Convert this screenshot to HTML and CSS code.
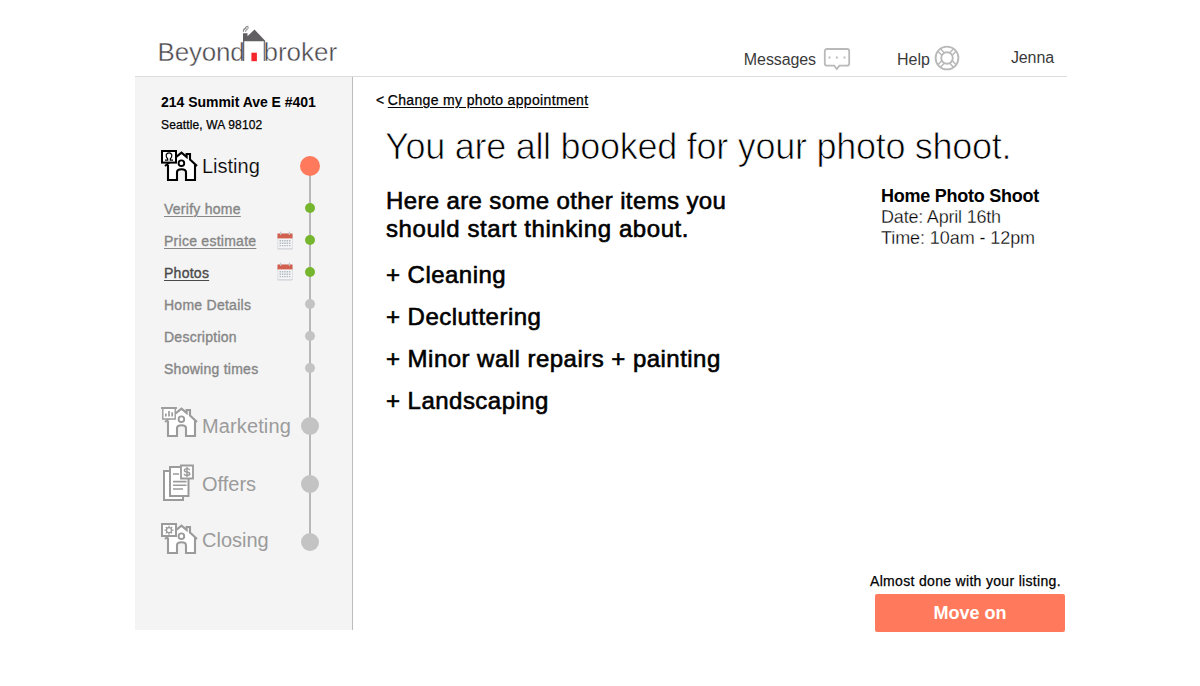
FILE: index.html
```
<!DOCTYPE html>
<html lang="en">
<head>
<meta charset="utf-8">
<title>Beyond broker</title>
<link rel="stylesheet" href="styles.css">
</head>
<body>
<svg width="0" height="0" class="defs">
  <defs>
    <g id="house" stroke-width="2.1" stroke="currentColor">
      <path d="M7 14.5L20.5 3.2L34 14.5V30H25V22Q25 19 20.5 19T16 22V30H7Z" fill="#fff" stroke="none"/>
      <path d="M7 15V30H16V22.3Q16 19.2 20.5 19.2T25 22.3V30H34V14.5M4 16L20.5 2.6L25.6 7V4H29V9.6L36 16" fill="none"/>
      <circle cx="20.4" cy="13.2" r="2.8" fill="#fff" stroke-width="1.9"/>
    </g>
    <g id="calendar">
      <rect x="0.8" y="3" width="14.6" height="15" rx="1" fill="#f4f5f6" stroke="#cfd2d6" stroke-width=".6"/>
      <path d="M.5 2.5H15.5V7.4H.5Z" fill="#d2604f"/>
      <path d="M3.6 .8V4M12.4 .8V4" stroke="#c9c4c4" stroke-width="1.2"/>
      <path d="M2.5 9.8H13.5M2.5 12.2H13.5M2.5 14.6H13.5" stroke="#b3bac2" stroke-width="1.4" stroke-dasharray="1.5 .85"/>
      <path d="M.5 17.8H15.5" stroke="#c9ccd0" stroke-width=".8"/>
    </g>
  </defs>
</svg>
<div class="page">
  <header class="topbar">
    <div class="logo">
      <span class="word first">Beyond</span>
      <svg class="mark" width="26" height="38" viewBox="0 0 26 38">
        <path d="M2 8.2H6.5V11.2L13.5 4.4L24.6 16.2H2Z" fill="#625f63"/>
        <path d="M2.6 16V36M23.4 16V36" stroke="#68666a" stroke-width="1.3"/>
        <path d="M2.5 6.8Q2 4 4.5 3.4Q4 1.5 7.5 1.2M4.4 6.8Q4.6 4.8 6.6 4.2M5.5 3H8" stroke="#8c8a8d" stroke-width="1.1" fill="none"/>
        <path d="M10.4 27.7H15.9V36.2H10.4Z" fill="#f5262b"/>
      </svg>
      <span class="word">broker</span>
    </div>
    <nav class="links">
      <a class="link messages">Messages
        <svg width="28" height="24" viewBox="0 0 28 24" fill="none" stroke="#b9b9b9" stroke-width="1.8">
          <path d="M4 2H24Q26.2 2 26.2 4.2V16.5Q26.2 18.7 24 18.7H16.4L13.8 22L11.2 18.7H4Q1.8 18.7 1.8 16.5V4.2Q1.8 2 4 2Z"/>
          <path d="M5.6 10.5H7.4M12.9 10.5H14.7M20.6 10.5H22.4"/>
        </svg>
      </a>
      <a class="link help">Help
        <svg width="26" height="26" viewBox="0 0 26 26" fill="none" stroke="#b9b9b9" stroke-width="1.9">
          <circle cx="13" cy="13" r="11.4"/>
          <circle cx="13" cy="13" r="5.8"/>
          <path d="M7.7 10.2L4.2 6.6M10.2 7.7L6.7 4M15.8 7.7L19.3 4M18.3 10.2L21.8 6.6M18.3 15.8L21.8 19.4M15.8 18.3L19.3 22M10.2 18.3L6.7 22M7.7 15.8L4.2 19.4" stroke-width="1.5"/>
        </svg>
      </a>
      <a class="link user">Jenna</a>
    </nav>
  </header>
  <div class="columns">
    <aside class="sidebar">
      <div class="address">214 Summit Ave E #401</div>
      <div class="city">Seattle, WA 98102</div>
      <ol class="steps">
        <li class="stage active">
          <svg class="icon" width="38" height="34" viewBox="0 0 38 34">
            <use href="#house"/>
            <rect x="1" y="1" width="14" height="11.6" fill="#fff" stroke="currentColor" stroke-width="2"/>
            <path d="M4 10.2H6.7V9Q4.8 7 5.2 4.8Q6 2.9 8 2.9T10.8 4.8Q11.2 7 9.3 9V10.2H12" fill="none" stroke="currentColor" stroke-width="1.2"/>
          </svg>
          <span class="name">Listing</span><i class="dot"></i>
        </li>
        <li class="step done"><a class="name">Verify home</a><i class="dot"></i></li>
        <li class="step done"><a class="name">Price estimate</a><svg class="cal" width="16" height="19"><use href="#calendar"/></svg><i class="dot"></i></li>
        <li class="step done current"><a class="name">Photos</a><svg class="cal" width="16" height="19"><use href="#calendar"/></svg><i class="dot"></i></li>
        <li class="step"><span class="name">Home Details</span><i class="dot"></i></li>
        <li class="step"><span class="name">Description</span><i class="dot"></i></li>
        <li class="step"><span class="name">Showing times</span><i class="dot"></i></li>
        <li class="stage marketing">
          <svg class="icon" width="38" height="34" viewBox="0 0 38 34">
            <use href="#house" y="-1"/>
            <path d="M1.8 1H14.2V12H1.8Z" fill="#fff" stroke="currentColor" stroke-width="1.4"/>
            <path d="M0 1H16" stroke="currentColor" stroke-width="1.8"/>
            <path d="M4.8 9.5V6.5M8 9.5V4M11.2 9.5V5.2" stroke="currentColor" stroke-width="1.7"/>
          </svg>
          <span class="name">Marketing</span><i class="dot"></i>
        </li>
        <li class="stage offers">
          <svg class="icon" width="38" height="38" viewBox="0 0 38 38" fill="none" stroke="currentColor" stroke-width="2">
            <path d="M9 7H3V36H22V32" fill="#fff"/>
            <path d="M9 3H27.5V32H9Z" fill="#fff"/>
            <path d="M12 10H18M12 17.6H25.5M12 21.3H25.5M12 25H22" stroke-width="1.6"/>
            <path d="M20 1.5H32V14.5H20Z" fill="#fff" stroke-width="1.8"/>
            <path d="M28.7 6.2Q28.4 4.6 26 4.6T23.4 6.4Q23.4 7.7 26 8T28.8 9.9Q28.7 11.5 26 11.5T23.2 9.8M26 3.1V12.9" stroke-width="1.4"/>
          </svg>
          <span class="name">Offers</span><i class="dot"></i>
        </li>
        <li class="stage closing">
          <svg class="icon" width="38" height="34" viewBox="0 0 38 34">
            <use href="#house"/>
            <rect x="1" y="1" width="14" height="12" fill="#fff" stroke="currentColor" stroke-width="2"/>
            <g fill="none" stroke="currentColor" stroke-width="1.3">
              <circle cx="8" cy="7.2" r="2.5"/>
              <path d="M8 2.7V4.8M8 9.6V11.7M3.5 7.2H5.6M10.4 7.2H12.5M4.8 4L6.3 5.5M9.7 8.9L11.2 10.4M11.2 4L9.7 5.5M6.3 8.9L4.8 10.4"/>
            </g>
          </svg>
          <span class="name">Closing</span><i class="dot"></i>
        </li>
      </ol>
    </aside>
    <main class="content">
      <div class="back">&lt; <a class="change">Change my photo appointment</a></div>
      <h1 class="title">You are all booked for your photo shoot.</h1>
      <div class="details">
        <section class="todo">
          <h2 class="lead">Here are some other items you<br><span class="second">should start thinking about.</span></h2>
          <ul class="items">
            <li>+ Cleaning</li>
            <li>+ Decluttering</li>
            <li>+ Minor wall repairs + painting</li>
            <li>+ Landscaping</li>
          </ul>
        </section>
        <section class="booking">
          <h3 class="event">Home Photo Shoot</h3>
          <div class="when date">Date: April 16th</div>
          <div class="when time">Time: 10am - 12pm</div>
        </section>
      </div>
      <footer class="next">
        <div class="almost">Almost done with your listing.</div>
        <button class="move">Move on</button>
      </footer>
    </main>
  </div>
</div>
</body>
</html>
```
FILE: styles.css
```
* { box-sizing: border-box; }
body {
  margin: 0;
  background: #fff;
  color: #000;
  font-family: "Liberation Sans", Arial, sans-serif;
}
.defs { display: block; }
.page { width: 932px; margin: 0 0 0 135px; }
h1, h2, h3, ul, ol { margin: 0; padding: 0; font-weight: 400; list-style: none; }

.topbar {
  display: flex;
  justify-content: space-between;
  height: 77px;
  border-bottom: 1px solid #dcdcdc;
}
.logo { display: flex; align-items: flex-start; padding: 25px 0 0 22.5px; }
.word {
  padding-top: 12px;
  font-size: 26px;
  line-height: 30px;
  color: #4a484c;
  -webkit-text-stroke: .4px #fff;
}
.first { letter-spacing: -.2px; }
.mark { margin: 0 -4px 0 -3px; flex: none; }
.links { display: flex; padding-right: 13px; color: #3a3a3a; }
.link { display: flex; font-size: 16px; line-height: 20px; padding-top: 50px; letter-spacing: -.1px; }
.messages svg { margin: -3px 0 0 7px; }
.help { margin-left: 46px; letter-spacing: 0; }
.help svg { margin: -5px 0 0 4px; }
.user { margin-left: 51px; padding-top: 48px; }

.columns { display: flex; }
.sidebar {
  width: 218px;
  height: 553px;
  padding: 16px 0 0 26px;
  background: #f4f4f4;
  border-right: 1px solid #bdbdbd;
}
.address { font-size: 14px; font-weight: 700; line-height: 18px; letter-spacing: -.03px; white-space: nowrap; }
.city { margin-top: 6px; font-size: 12px; line-height: 16px; letter-spacing: .14px; -webkit-text-stroke: .25px #000; }
.steps {
  margin-top: 7px;
  background: linear-gradient(#b9b7b7, #b9b7b7) 148px 26px / 2px 376px no-repeat;
}
.stage, .step { display: flex; align-items: center; padding-right: 32px; }
.stage { height: 58px; color: #9b9b9b; font-size: 20px; }
.stage .name { width: 98px; margin-left: 3px; }
.icon { flex: none; }
.stage .dot { width: 18px; height: 18px; margin-left: 1px; }
.active { height: 52px; color: #000; }
.active .name { -webkit-text-stroke: .2px #f4f4f4; }
.active .dot { width: 20px; height: 20px; margin-left: 0; background: #ff7a5c; }
.active .icon { margin-top: 2px; }
.marketing { margin-top: 13px; }
.marketing .icon, .closing .icon { margin-top: -4px; }
.offers .icon { margin-top: -3px; }
.marketing .name { letter-spacing: .12px; }
.closing .name { margin-top: -4px; }
.step { height: 32px; padding: 0 37px 0 3px; font-size: 14px; letter-spacing: .26px; color: #868686; }
.step .name { padding-top: 2px; -webkit-text-stroke: .35px currentColor; }
.dot { flex: none; width: 10px; height: 10px; margin-left: auto; border-radius: 50%; background: #c3c3c3; }
.done .name { text-decoration: underline; text-underline-offset: 2px; text-decoration-thickness: 1px; }
.done .dot { background: #76b62f; }
.current { color: #4a4a4a; }
.cal { margin-left: auto; }
.current .cal { margin-top: -2px; }
.cal + .dot { margin-left: 12.5px; }

.content { flex: 1; display: flex; flex-direction: column; height: 555px; padding: 13px 2px 0 23px; }
.back { font-size: 14px; line-height: 20px; letter-spacing: .34px; -webkit-text-stroke: .25px #000; }
.change { text-decoration: underline; text-underline-offset: 2px; margin-left: -1px; }
.title {
  margin: 16px 0 0 9px;
  font-size: 36px;
  line-height: 42px;
  letter-spacing: -.27px;
  white-space: nowrap;
  -webkit-text-stroke: .75px #fff;
}
.details { display: flex; justify-content: space-between; padding: 19px 26px 0 10px; }
.lead { font-size: 24px; line-height: 28px; letter-spacing: .37px; -webkit-text-stroke: .6px #000; }
.second { letter-spacing: .58px; }
.items { margin-top: 11px; font-size: 24px; line-height: 42px; letter-spacing: .47px; -webkit-text-stroke: .6px #000; }
.booking { font-size: 18px; line-height: 21px; white-space: nowrap; }
.event { font-size: 18px; font-weight: 700; letter-spacing: -.25px; margin-top: -1px; }
.when { -webkit-text-stroke: .3px #fff; }
.date { letter-spacing: -.2px; }
.time { letter-spacing: -.08px; }
.next { width: 195px; margin: auto 0 0 auto; }
.almost { font-size: 14px; line-height: 20px; letter-spacing: .32px; white-space: nowrap; -webkit-text-stroke: .25px #000; }
.move {
  display: block;
  width: 190px;
  height: 38px;
  margin: 3px 0 0 5px;
  padding: 0;
  border: 0;
  border-radius: 2px;
  background: #ff7a5c;
  color: #fff;
  font: 700 18px "Liberation Sans", Arial, sans-serif;
}
```
